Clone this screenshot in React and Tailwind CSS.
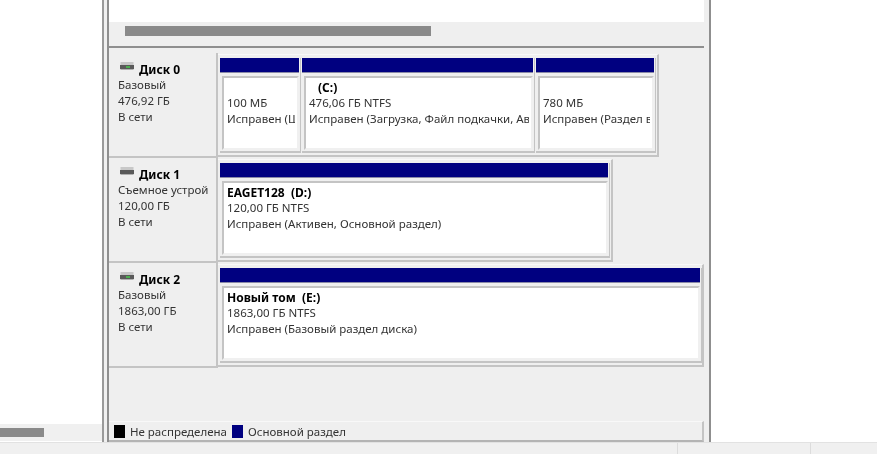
import React from 'react';

function DriveIcon({ led }) {
  return (
    <svg width="14" height="9" viewBox="0 0 14 9" className="mr-[5px] mt-[-7px] shrink-0">
      <rect x="0.5" y="0" width="13" height="3" fill="#c8c8c8" />
      <rect x="0" y="3" width="14" height="4" fill="#5a5a5a" />
      <rect x="0.5" y="7" width="13" height="1" fill="#b0b0b0" />
      {led && <rect x="6" y="4" width="4" height="2" fill="#4caf50" />}
    </svg>
  );
}

function DiskLabel({ name, kind, size, led }) {
  return (
    <div className="w-[109px] h-[105px] shrink-0 pl-[9px] pt-[8px] border-r-2 border-b-2 border-[#c4c4c4] bg-[#efefef] text-[#333] leading-[16px]">
      <div className="w-[91px] overflow-hidden whitespace-nowrap">
        <div className="flex items-center pl-[2px] mt-px mb-[-1px] font-bold text-black text-[12px]">
          <DriveIcon led={led} />
          <span>{name}</span>
        </div>
        <div>{kind}</div>
        <div>{size}</div>
        <div>В сети</div>
      </div>
    </div>
  );
}

function Partition({ className, title, size, status }) {
  return (
    <div className={`flex flex-col h-full shrink-0 border-r border-b-2 border-[#c4c4c4] ${className}`}>
      <div className="h-[15px] shrink-0 mr-px bg-[#000080] border-b border-[#8a8aa8]" />
      <div className="flex-1 min-h-0 mt-[3px] ml-[2px] mr-px mb-px bg-white border-t-2 border-l-2 border-r-2 border-b-2 border-t-[#c4c4c4] border-l-[#c4c4c4] border-r-[#f0f0f0] border-b-[#f0f0f0] pl-[3px] pt-[2px] text-[#333] leading-[16px]">
        <div className="mr-[2px] overflow-hidden whitespace-pre">
          <div className="h-[15px] font-bold text-black text-[12px]">{title}</div>
          <div>{size}</div>
          <div>{status}</div>
        </div>
      </div>
    </div>
  );
}

function DiskRow({ width, label, children }) {
  return (
    <div className="flex h-[105px] shrink-0">
      <DiskLabel {...label} />
      <div className={`h-[103px] mt-px pl-[2px] pt-[3px] pb-[2px] pr-[1px] flex gap-px border-t border-t-[#f8f8f8] border-r-2 border-b-2 border-r-[#c4c4c4] border-b-[#c4c4c4] ${width}`}>
        {children}
      </div>
    </div>
  );
}

export default function App() {
  return (
    <div className="w-[877px] h-[454px] overflow-hidden flex flex-col bg-white text-[11.5px] font-['Noto_Sans',sans-serif] blur-[0.35px]">
      <div className="flex h-[442px] shrink-0">
        {/* left pane, mostly scrolled away */}
        <div className="w-[104px] shrink-0 flex flex-col border-r-2 border-[#9a9a9a]">
          <div className="flex-1" />
          <div className="h-[17px] bg-[#f0f0f0] pt-[4px] mb-[1px]">
            <div className="w-[44px] h-[9px] bg-[#8a8a8a]" />
          </div>
        </div>
        <div className="w-[3px] shrink-0 bg-[#f0f0f0]" />
        {/* right pane */}
        <div className="w-[604px] shrink-0 flex flex-col border-x-2 border-[#8f8f8f] bg-[#efefef]">
          <div className="h-[22px] bg-white mr-[5px]" />
          <div className="h-[20px] shrink-0 pt-[4px] pl-[16px] mr-[5px]">
            <div className="w-[306px] h-[10px] bg-[#8a8a8a]" />
          </div>
          <div className="h-[3px] shrink-0 mr-[5px] mt-[3px] border-b-2 border-[#8f8f8f]" />
          <div className="flex-1 min-h-0 flex flex-col pt-[5px] mr-[5px]">
            <DiskRow width="w-[441px]" label={{ name: 'Диск 0', kind: 'Базовый', size: '476,92 ГБ', led: true }}>
              <Partition className="w-[81px]" title="" size="100 МБ" status="Исправен (Шифрованный EFI)" />
              <Partition className="w-[233px]" title={<span className="pl-[9px]">(C:)</span>} size="476,06 ГБ NTFS" status="Исправен (Загрузка, Файл подкачки, Аварийный дамп)" />
              <Partition className="w-[120px]" title="" size="780 МБ" status="Исправен (Раздел восстановления)" />
            </DiskRow>
            <DiskRow width="w-[395px]" label={{ name: 'Диск 1', kind: 'Съемное устройство', size: '120,00 ГБ' }}>
              <Partition className="w-[390px]" title="EAGET128  (D:)" size="120,00 ГБ NTFS" status="Исправен (Активен, Основной раздел)" />
            </DiskRow>
            <DiskRow width="w-[486px]" label={{ name: 'Диск 2', kind: 'Базовый', size: '1863,00 ГБ', led: true }}>
              <Partition className="w-[482px]" title="Новый том  (E:)" size="1863,00 ГБ NTFS" status="Исправен (Базовый раздел диска)" />
            </DiskRow>
            <div className="flex-1" />
            <div className="h-[21px] shrink-0 flex items-center pl-[5px] border-t border-[#f8f8f8] border-r-2 border-b-2 border-r-[#c4c4c4] border-b-[#b4b4b4] text-[#333]">
              <span className="w-[11px] h-[13px] bg-black mr-[5px]" />
              <span className="w-[102px] mt-[2px]">Не распределена</span>
              <span className="w-[11px] h-[13px] bg-[#000080] mr-[5px]" />
              <span className="mt-[2px]">Основной раздел</span>
            </div>
          </div>
        </div>
        <div className="flex-1" />
      </div>
      {/* status bar */}
      <div className="flex-1 flex bg-[#f0f0f0] border-t border-[#e2e2e2]">
        <div className="w-[678px] border-r border-[#dcdcdc]" />
        <div className="w-[133px] border-r border-[#dcdcdc]" />
      </div>
    </div>
  );
}
